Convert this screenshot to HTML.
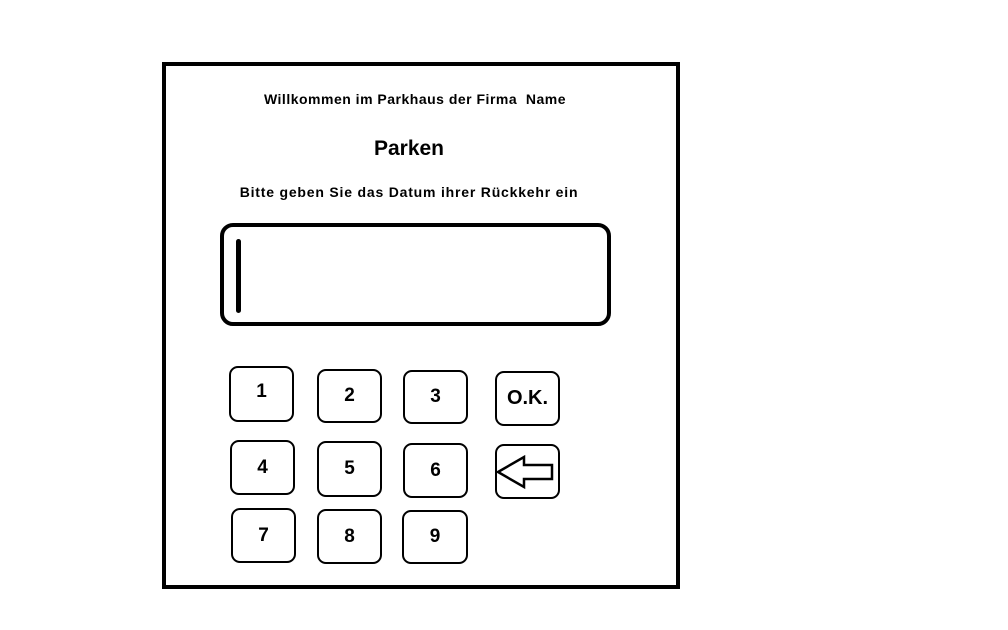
<!DOCTYPE html>
<html><head><meta charset="utf-8"><style>
body{margin:0;background:#fff;width:1008px;height:630px;overflow:hidden;position:relative;font-family:"Comic Sans MS","Liberation Sans",sans-serif;}
.t{position:absolute;left:162px;width:518px;text-align:center;font-weight:bold;color:#000;white-space:nowrap}
.k{position:absolute;box-sizing:border-box;border:2.5px solid #000;border-radius:9px;font-weight:bold;font-size:19px;display:flex;align-items:center;justify-content:center}
</style></head><body>
<div style="position:absolute;left:162px;top:62px;width:518px;height:527px;box-sizing:border-box;border:4px solid #000"></div>
<div class="t" style="top:91px;font-size:14px;left:156px;letter-spacing:0.5px">Willkommen im Parkhaus der Firma&nbsp; Name</div>
<div class="t" style="top:137px;font-size:21px;left:150px">Parken</div>
<div class="t" style="top:184px;font-size:14px;left:150px;letter-spacing:0.8px">Bitte geben Sie das Datum ihrer Rückkehr ein</div>
<div style="position:absolute;left:220px;top:223px;width:391px;height:103px;box-sizing:border-box;border:4px solid #000;border-radius:13px"></div>
<div style="position:absolute;left:236px;top:239px;width:5px;height:74px;background:#000;border-radius:3px"></div>
<div class="k" style="left:229px;top:366px;width:65px;height:56px;padding-bottom:4px">1</div>
<div class="k" style="left:317px;top:369px;width:65px;height:54px">2</div>
<div class="k" style="left:403px;top:370px;width:65px;height:54px">3</div>
<div class="k" style="left:495px;top:371px;width:65px;height:55px;font-size:20px">O.K.</div>
<div class="k" style="left:230px;top:440px;width:65px;height:55px">4</div>
<div class="k" style="left:317px;top:441px;width:65px;height:56px">5</div>
<div class="k" style="left:403px;top:443px;width:65px;height:55px">6</div>
<div class="k" style="left:495px;top:444px;width:65px;height:55px"></div>
<svg style="position:absolute;left:0;top:0" width="1008" height="630"><polygon points="498,472 524,457 524,465 552,465 552,479 524,479 524,487" fill="none" stroke="#000" stroke-width="2.5"/></svg>
<div class="k" style="left:231px;top:508px;width:65px;height:55px">7</div>
<div class="k" style="left:317px;top:509px;width:65px;height:55px">8</div>
<div class="k" style="left:402px;top:510px;width:66px;height:54px">9</div>
</body></html>
